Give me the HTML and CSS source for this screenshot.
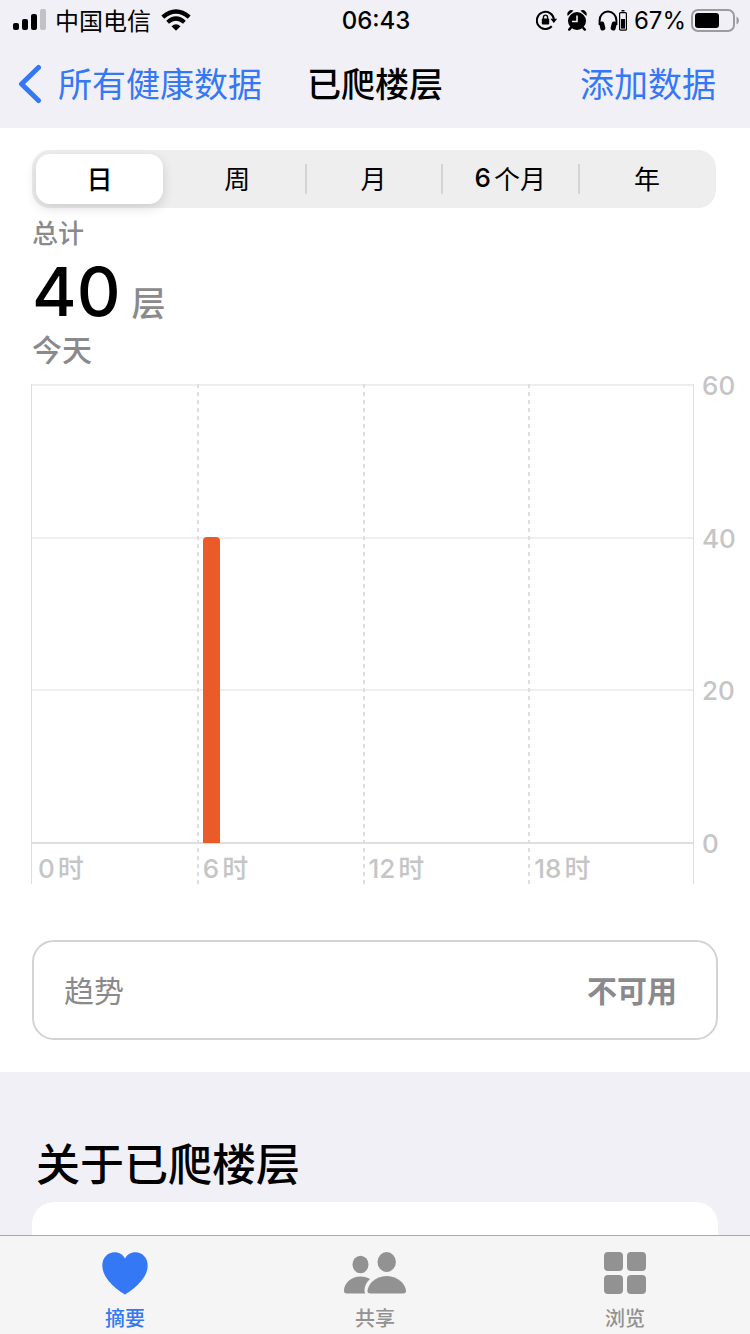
FILE: index.html
```html
<!DOCTYPE html>
<html lang="zh-CN">
<head>
<meta charset="utf-8">
<meta name="viewport" content="width=device-width, initial-scale=1">
<title>已爬楼层</title>
<link rel="stylesheet" href="styles.css">
</head>
<body>
<header class="top">
  <div class="status">
    <div class="status-left">
      <svg class="signal" width="34" height="22" viewBox="0 0 34 22" aria-hidden="true">
        <rect x="0" y="14" width="6" height="7" rx="2"/>
        <rect x="9" y="10" width="6" height="11" rx="2"/>
        <rect x="18" y="5" width="6" height="16" rx="2"/>
        <rect x="27" y="0" width="6" height="21" rx="2" fill="#c2c1c6"/>
      </svg>
      <span class="carrier">中国电信</span>
      <svg width="30" height="22" viewBox="0 0 30 22" aria-hidden="true">
        <path d="M1.800 8.200Q15-3.200 28.200 8.200" fill="none" stroke="#000" stroke-width="4.400"/>
        <path d="M6.600 13.300Q15 5.800 23.400 13.300" fill="none" stroke="#000" stroke-width="4.200"/>
        <path d="M10.500 17.200Q15 13.400 19.500 17.200L15 21.700Z"/>
      </svg>
    </div>
    <span class="time">06:43</span>
    <div class="status-right">
      <svg width="21" height="20" viewBox="0 0 21 20" aria-hidden="true">
        <path d="M15.800 16.300A8.600 8.600 0 1 1 18 9.500" fill="none" stroke="#000" stroke-width="2"/>
        <path d="M14.400 8.700H21.200L17.800 13Z"/>
        <rect x="5.800" y="8.600" width="7.400" height="6" rx="1"/>
        <path d="M7.400 9V7.400a2.100 2.300 0 0 1 4.200 0V9" fill="none" stroke="#000" stroke-width="1.400"/>
      </svg>
      <svg class="alarm" width="20" height="21" viewBox="0 0 20 21" aria-hidden="true">
        <circle cx="10" cy="11" r="9"/>
        <path d="M.8 6A4 4 0 0 1 6.500 .8ZM19.200 6A4 4 0 0 0 13.500 .8Z"/>
        <path d="M1.200 6.400L6.800 1.200M18.800 6.400L13.200 1.200" stroke="#f1f0f6" stroke-width=".9"/>
        <path d="M4.500 17L2.200 19.600M15.500 17L17.800 19.600" stroke="#000" stroke-width="2.400" stroke-linecap="round"/>
        <path d="M10 5.500V11.500H5" fill="none" stroke="#f1f0f6" stroke-width="1.600"/>
      </svg>
      <svg class="phones" width="20" height="21" viewBox="0 0 20 21" aria-hidden="true">
        <path d="M1.600 15V10.400a8.400 8.800 0 0 1 16.800 0V15" fill="none" stroke="#000" stroke-width="2"/>
        <rect x="1.800" y="11.600" width="5" height="9" rx="2" transform="rotate(-14 4 16)"/>
        <rect x="13.200" y="11.600" width="5" height="9" rx="2" transform="rotate(14 16 16)"/>
      </svg>
      <svg width="8" height="21" viewBox="0 0 8 21" aria-hidden="true">
        <rect x="2.500" y="0" width="3" height="1.500"/>
        <rect x=".6" y="2.600" width="6.800" height="17.600" rx="1" fill="none" stroke="#000" stroke-width="1.200"/>
        <rect x="2" y="9" width="4" height="9.600"/>
      </svg>
      <span class="percent">67%</span>
      <svg width="48" height="23" viewBox="0 0 48 23" aria-hidden="true">
        <rect x="1" y="1" width="42" height="21" rx="6" fill="none" stroke="#9c9ba0" stroke-width="2"/>
        <rect x="4" y="4" width="24" height="15" rx="3"/>
        <path d="M45.500 7.500Q48 8.500 48 11.500T45.500 15.500Z" fill="#9c9ba0"/>
      </svg>
    </div>
  </div>
  <nav class="nav">
    <a class="back" href="#">
      <svg width="24" height="40" viewBox="0 0 24 40" aria-hidden="true"><path d="M20.500 3.500L3.500 20L20.500 36.500" fill="none" stroke="#3478f6" stroke-width="5" stroke-linecap="round" stroke-linejoin="round"/></svg>
      <span class="nav-text">所有健康数据</span>
    </a>
    <h1 class="title nav-text">已爬楼层</h1>
    <a class="add nav-text" href="#">添加数据</a>
  </nav>
</header>

<main>
  <section class="panel">
    <div class="segments" role="tablist">
      <button class="segment selected" role="tab" aria-selected="true">日</button>
      <button class="segment" role="tab">周</button>
      <button class="segment divided" role="tab">月</button>
      <button class="segment divided" role="tab"><b>6</b>个月</button>
      <button class="segment divided" role="tab">年</button>
    </div>
    <p class="label">总计</p>
    <p class="total"><span class="number">40</span><span class="unit">层</span></p>
    <p class="day">今天</p>

    <div class="chart">
      <div class="plot">
        <div class="rows"><i></i><i></i><i></i></div>
        <div class="hours">
          <span class="hour first"><b>0</b>时</span>
          <span class="hour"><b>6</b>时</span>
          <span class="hour"><b>12</b>时</span>
          <span class="hour last"><b>18</b>时</span>
        </div>
        <div class="bars"><div class="bar"></div></div>
      </div>
      <div class="scale"><span>60</span><span>40</span><span>20</span><span>0</span></div>
    </div>

    <button class="trend"><span>趋势</span><strong>不可用</strong></button>
  </section>

  <section class="about">
    <h2 class="about-title">关于已爬楼层</h2>
    <div class="about-card"></div>
  </section>
</main>

<nav class="tabs">
  <a class="tab active" href="#">
    <svg width="46" height="44" viewBox="0 0 46 44" aria-hidden="true"><path d="M23 43.500C20 42 .3 29.500 .3 14.500C.3 6.500 6 1.200 12.500 1.200C17.500 1.200 21 3.500 23 7.500C25 3.500 28.500 1.200 33.500 1.200C40 1.200 45.700 6.500 45.700 14.500C45.700 29.500 26 42 23 43.500Z"/></svg>
    <span>摘要</span>
  </a>
  <a class="tab" href="#">
    <svg width="64" height="44" viewBox="0 0 64 44" aria-hidden="true">
      <ellipse cx="17.500" cy="13.500" rx="8" ry="8.800"/>
      <ellipse cx="43.700" cy="11" rx="9.200" ry="10"/>
      <path d="M4 42.500C1.500 42.500 1 41.500 1 39.500C1 33 7.500 25.500 17.500 25.500C21.500 25.500 24.500 26.500 27 28C23.500 31 21.500 35.500 21.500 39C21.500 40.500 21.700 41.500 22.300 42.500Z"/>
      <path d="M27.500 42.500C25 42.500 24.500 41.500 24.500 40C24.500 34 32 25 43.700 25S63 34 63 40C63 41.500 62.500 42.500 60 42.500Z"/>
    </svg>
    <span>共享</span>
  </a>
  <a class="tab" href="#">
    <svg width="44" height="44" viewBox="0 0 44 44" aria-hidden="true">
      <rect x="1" y="1" width="19" height="19" rx="4"/><rect x="24" y="1" width="19" height="19" rx="4"/>
      <rect x="1" y="24" width="19" height="19" rx="4"/><rect x="24" y="24" width="19" height="19" rx="4"/>
    </svg>
    <span>浏览</span>
  </a>
</nav>
</body>
</html>
```
FILE: styles.css
```css
* { box-sizing: border-box; }

body {
  margin: 0;
  height: 100vh;
  display: flex;
  flex-direction: column;
  background: #f1f0f6;
  color: #000;
  font-family: Inter, "Noto Sans CJK SC", sans-serif;
}

h1, h2, p { margin: 0; }
b { font-weight: 500; }
a { color: #3478f6; text-decoration: none; }
button { border: 0; font: inherit; color: inherit; background: none; }
svg { display: block; flex: none; }

.status, .nav {
  display: grid;
  grid-template-columns: 1fr auto 1fr;
  align-items: center;
}
.status { height: 40px; padding: 0 11px 0 13px; font-size: 24px; }
.status-left, .status-right { display: flex; align-items: center; }
.carrier { margin: 0 10px 0 8px; padding-bottom: 2px; }
.time { font-weight: 500; }
.status-right { justify-content: flex-end; }
.alarm { margin-left: 10px; }
.phones { margin: 0 1px 0 11px; }
.percent { margin: 0 5px 0 7px; }

.nav { height: 88px; padding: 0 18px; font-size: 34px; }
.nav-text { padding-bottom: 4px; white-space: nowrap; }
.back { display: flex; align-items: center; gap: 16px; }
.title { font-size: 34px; font-weight: 500; }
.add { justify-self: end; margin-right: 16px; }

main { flex: 1; min-height: 0; overflow: hidden; }
.panel { padding: 22px 32px 32px; background: #fff; }

.segments {
  display: grid;
  grid-template-columns: repeat(5, 1fr);
  height: 58px;
  margin-right: 2px;
  border-radius: 18px;
  background: #eee;
}
.segment {
  display: flex;
  align-items: center;
  justify-content: center;
  gap: 3px;
  padding: 0 0 4px;
  font-size: 26px;
}
.divided {
  margin-left: -1px;
  background: linear-gradient(#d4d4d6, #d4d4d6) left center / 2px 30px no-repeat;
}
.selected {
  margin: 4px 6px 4px 4px;
  border-radius: 14px;
  background: #fff;
  box-shadow: 0 4px 12px rgba(0, 0, 0, .14);
  font-weight: 500;
}

.label, .day, .unit { color: #8a8a8d; font-weight: 500; }
.label { font-size: 26px; line-height: 52px; }
.total { display: flex; align-items: baseline; gap: 11px; height: 64px; line-height: 62px; }
.number { font-size: 68px; font-weight: 500; }
.unit { font-size: 34px; line-height: 34px; }
.day { font-size: 30px; line-height: 52px; }

.chart { display: flex; margin: 8px -32px 56px 0; }
.plot { flex: 1; display: grid; grid-template-rows: 460px 40px; }
.rows, .bars { grid-area: 1 / 1; }
.rows { display: grid; grid-template-rows: repeat(3, 1fr); border-bottom: 2px solid #dededf; }
.rows i { border-top: 2px solid #eee; }
.hours {
  grid-area: 1 / 1 / 3 / 2;
  display: grid;
  grid-template-columns: repeat(4, 1fr);
  margin-left: -1px;
  color: #c5c5c6;
  font-size: 26px;
  font-weight: 500;
}
.hour {
  display: flex;
  align-items: flex-end;
  gap: 3px;
  padding-left: 6px;
  line-height: 30px;
  background: repeating-linear-gradient(#dedee0 0 4px, transparent 4px 8px) left / 2px 100% no-repeat;
}
.first { background: none; border-left: 1px solid #dedee0; }
.last { border-right: 1px solid #dedee0; }
.bars { display: grid; grid-template-columns: repeat(24, 1fr); align-items: end; justify-items: center; padding: 2px 0 1px; }
.bar { grid-column: 7; width: 17px; height: 67%; border-radius: 4px 4px 0 0; background: #eb5a29; }
.scale {
  display: flex;
  flex-direction: column;
  justify-content: space-between;
  width: 56px;
  height: 490px;
  margin-top: -14px;
  padding-left: 8px;
  color: #c5c5c6;
  font-size: 26px;
  font-weight: 500;
  line-height: 32px;
}

.trend {
  display: flex;
  align-items: center;
  justify-content: space-between;
  width: 100%;
  height: 100px;
  padding: 0 39px 2px 30px;
  border: 2px solid #d3d3d7;
  border-radius: 22px;
  color: #8a8a8d;
  font-size: 30px;
}

.about { padding: 56px 32px 0; }
.about-title { padding-left: 4px; font-size: 44px; font-weight: 500; line-height: 74px; }
.about-card { height: 200px; border-radius: 22px; background: #fff; }

.tabs {
  flex: none;
  display: grid;
  grid-template-columns: repeat(3, 1fr);
  height: 99px;
  border-top: 1px solid #a9a9ab;
  background: #f5f5f5;
}
.tab {
  display: flex;
  flex-direction: column;
  align-items: center;
  gap: 9px;
  padding-top: 15px;
  color: #929292;
  fill: currentColor;
  font-size: 20px;
  font-weight: 500;
  line-height: 30px;
}
.active { color: #3478f6; }
```
